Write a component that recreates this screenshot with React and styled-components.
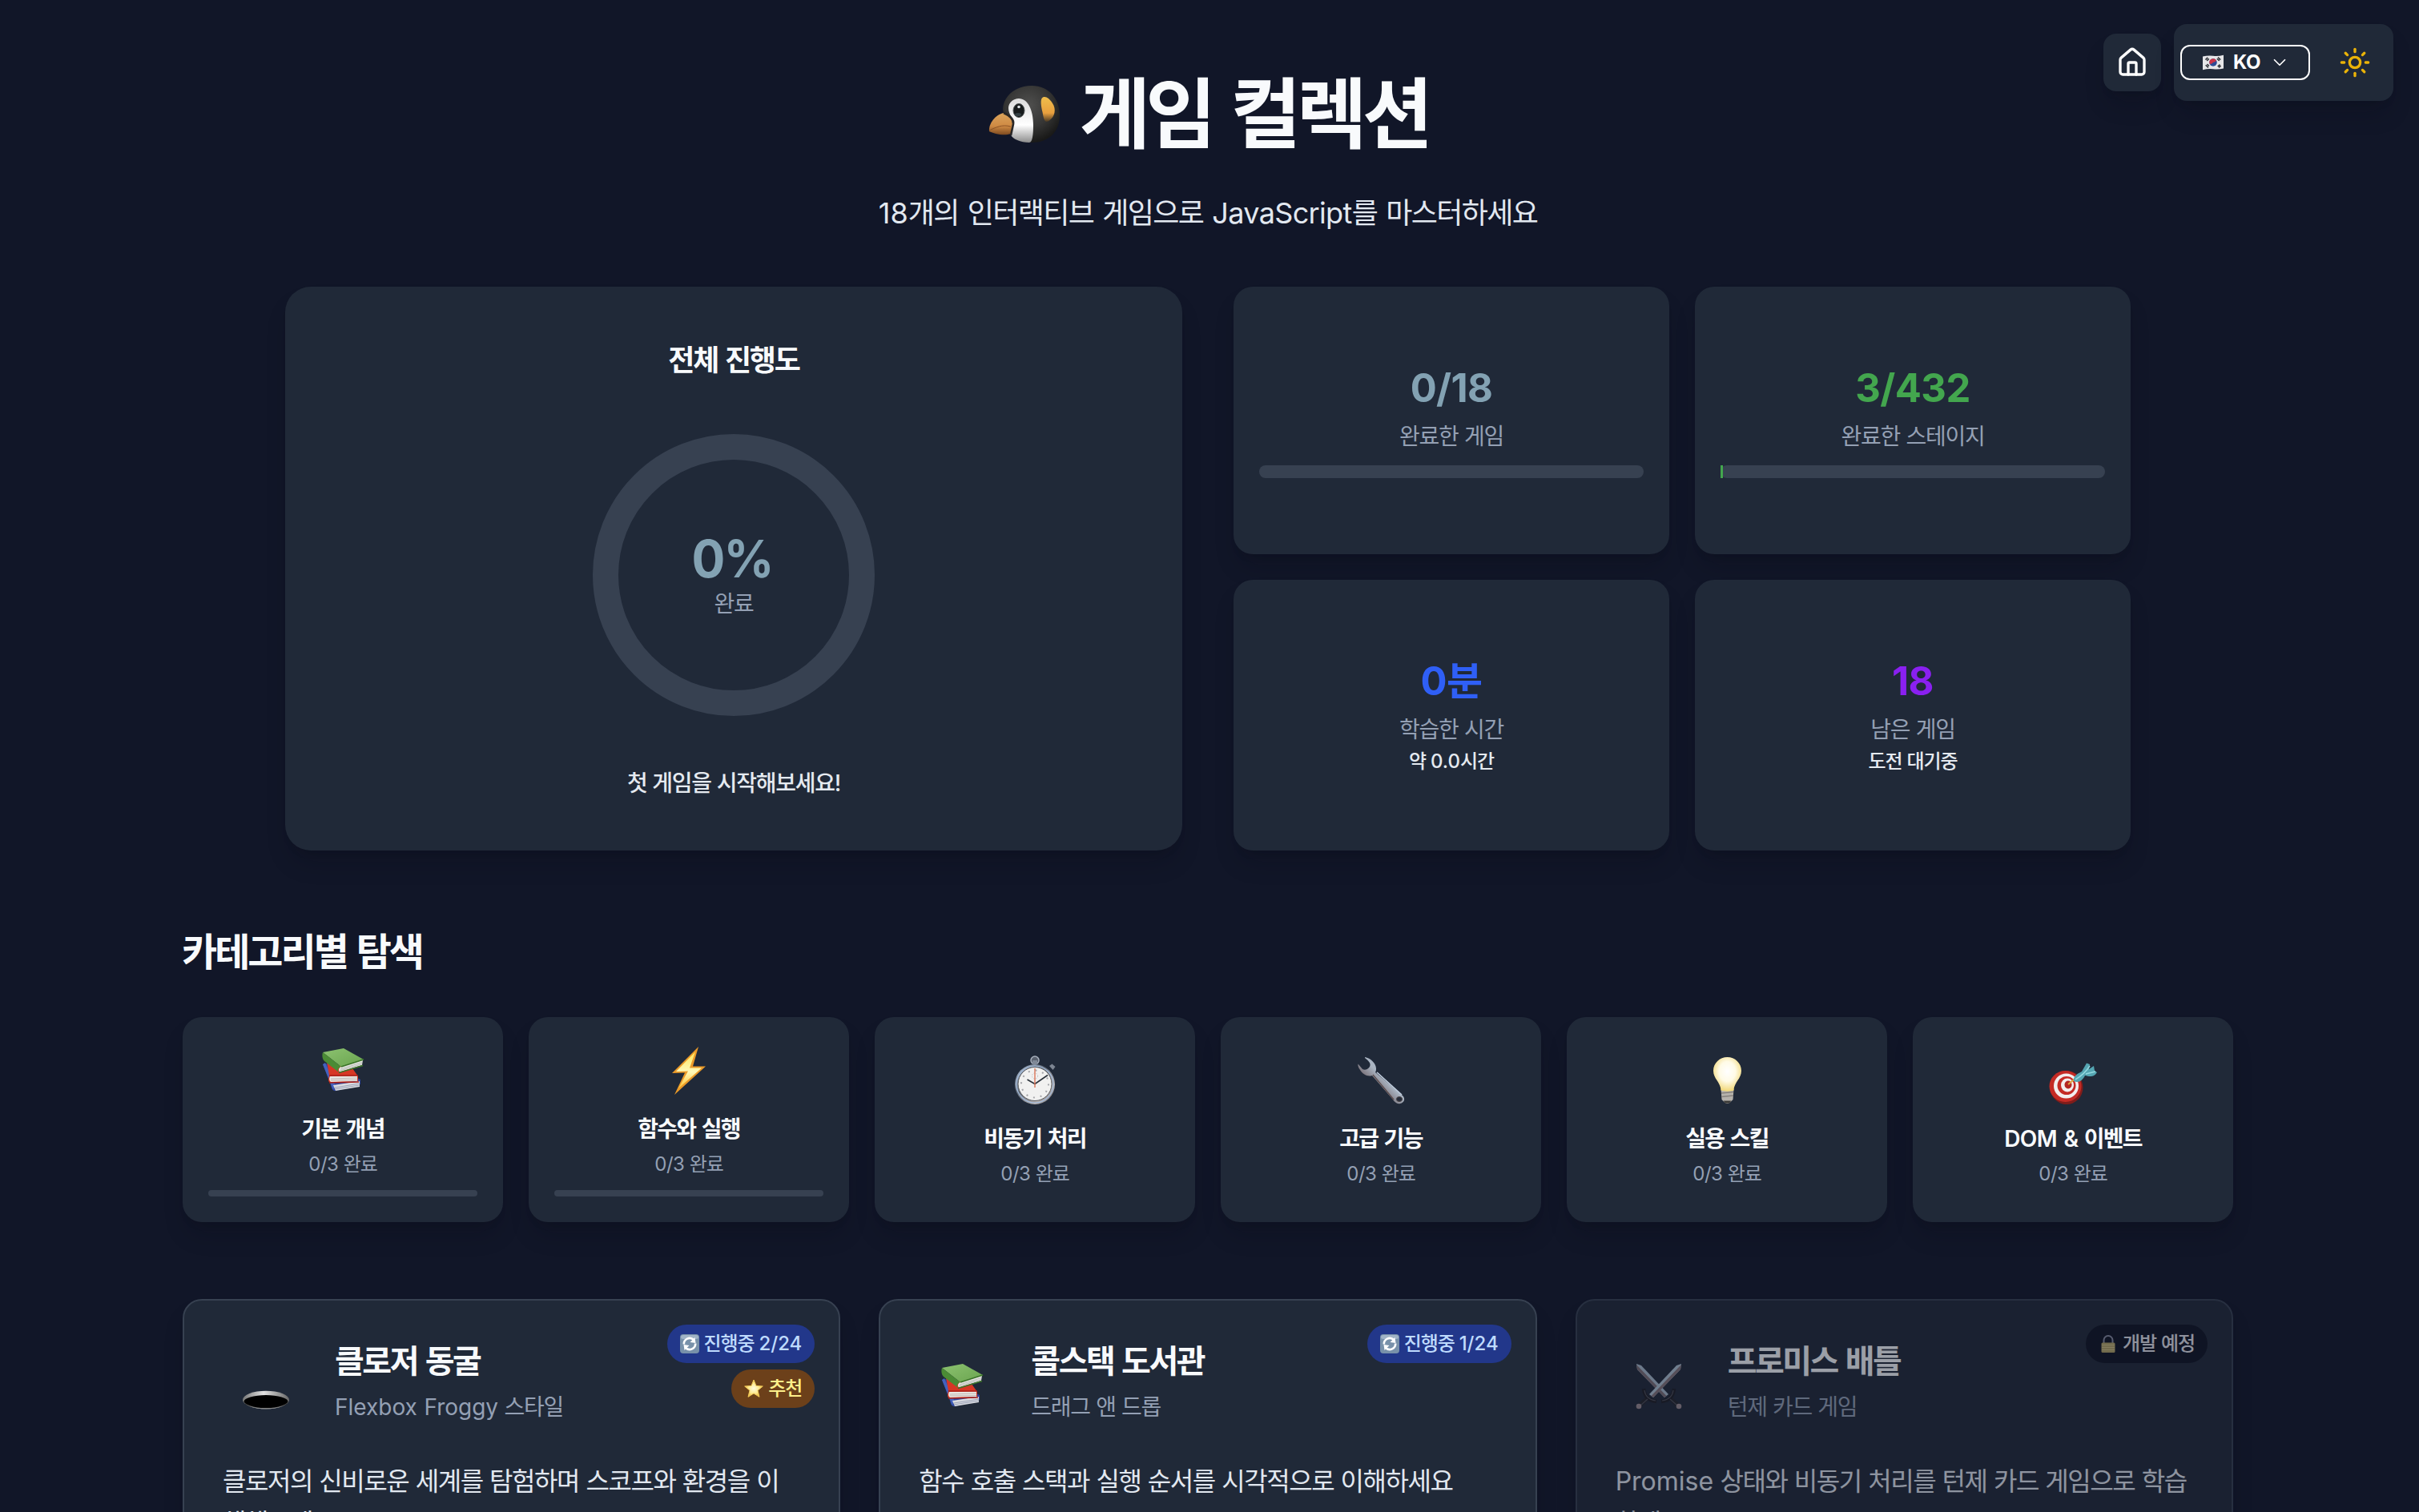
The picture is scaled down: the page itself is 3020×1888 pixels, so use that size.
import React from "react";
import styled, { createGlobalStyle, css } from "styled-components";
import { House, Sun, ChevronDown } from "lucide-react";

const Global = createGlobalStyle`
  *, *::before, *::after { box-sizing: border-box; }
  body {
    margin: 0;
    background: #111628;
    overflow: hidden;
    font-family: Inter, "Noto Sans CJK KR", sans-serif;
    -webkit-font-smoothing: antialiased;
  }
  h1, h2, h3, p { margin: 0; }
`;

const surface = css`
  background: #202938;
  box-shadow: 0 20px 30px -6px rgba(8, 10, 20, 0.2), 0 8px 12px -8px rgba(8, 10, 20, 0.2);
`;
const korean = css`
  letter-spacing: -0.045em;
  word-spacing: 0.025em;
  white-space: nowrap;
`;
const koreanHeading = css`
  letter-spacing: -0.062em;
  word-spacing: 0.07em;
  white-space: nowrap;
`;

const Latin = styled.span`
  letter-spacing: ${(p) => p.$ls || 0};
`;

const Page = styled.div`
  height: 1888px;
  overflow: hidden;
  padding: 82px 4px 0 0;
  color: #f8fafc;
`;

/* floating controls */
const Controls = styled.div`
  position: absolute;
  top: 30px;
  right: 32px;
  display: flex;
  align-items: center;
  gap: 16px;
`;
const HomeButton = styled.button`
  ${surface}
  width: 72px;
  height: 72px;
  border: 0;
  border-radius: 16px;
  padding: 0;
  display: grid;
  place-items: center;
  color: #fff;
`;
const Settings = styled.div`
  ${surface}
  height: 96px;
  width: 274px;
  border-radius: 16px;
  padding: 0 8px;
  display: flex;
  align-items: center;
  gap: 16px;
`;
const LangButton = styled.button`
  width: 162px;
  height: 44px;
  background: transparent;
  border: 2px solid #fff;
  border-radius: 12px;
  color: #fff;
  display: flex;
  align-items: center;
  padding: 0 0 0 26px;
  font: 700 24px/40px Inter, sans-serif;
`;
const LangCode = styled.span`
  margin: -1px 11px 0 12px;
  letter-spacing: -0.01em;
`;
const ThemeButton = styled.button`
  width: 80px;
  height: 80px;
  border: 0;
  background: transparent;
  padding: 0;
  display: grid;
  place-items: center;
  color: #eab308;
`;

/* header */
const Header = styled.header`
  display: flex;
  flex-direction: column;
  align-items: center;
  margin-bottom: 64px;
`;
const Title = styled.h1`
  ${koreanHeading}
  display: flex;
  align-items: center;
  gap: 23px;
  font-size: 96px;
  line-height: 120px;
  font-weight: 700;
`;
const Subtitle = styled.p`
  ${korean}
  word-spacing: 0.07em;
  margin-top: 36px;
  font-size: 36px;
  line-height: 56px;
  color: #e2e8f0;
`;

/* progress */
const Progress = styled.section`
  width: 2304px;
  height: 704px;
  margin: 0 auto;
  display: grid;
  grid-template-columns: 1fr 1fr;
  gap: 64px;
`;
const Overall = styled.div`
  ${surface}
  border-radius: 32px;
  padding: 64px;
  display: flex;
  flex-direction: column;
  align-items: center;
  gap: 64px;
`;
const OverallTitle = styled.h2`
  ${koreanHeading}
  font-size: 36px;
  line-height: 56px;
  font-weight: 700;
`;
const Ring = styled.div`
  width: 352px;
  height: 352px;
  border: 32px solid #374151;
  border-radius: 50%;
  display: flex;
  flex-direction: column;
  align-items: center;
  justify-content: center;
`;
const Percent = styled.div`
  font-size: 64px;
  line-height: 72px;
  font-weight: 700;
  letter-spacing: -0.03em;
  margin-right: 4px;
  transform: scaleX(0.97);
  color: #83a2b3;
`;
const Label = styled.div`
  ${korean}
  font-size: 28px;
  line-height: 40px;
  color: #94a0b4;
`;
const Cheer = styled.p`
  ${korean}
  font-size: 28px;
  line-height: 40px;
  font-weight: 500;
  color: #e5eaf0;
`;
const Stats = styled.div`
  display: grid;
  grid-template-columns: 1fr 1fr;
  grid-template-rows: auto auto;
  gap: 32px;
`;
const StatCard = styled.div`
  ${surface}
  border-radius: 24px;
  padding: 32px;
  display: flex;
  flex-direction: column;
  align-items: center;
  justify-content: center;
`;
const StatValue = styled.div`
  font-size: 49px;
  line-height: 64px;
  font-weight: 700;
  letter-spacing: -0.012em;
  margin-bottom: 8px;
  color: ${(p) => p.$color};
`;
const StatNote = styled.div`
  ${korean}
  margin-top: 4px;
  font-size: 24px;
  line-height: 32px;
  font-weight: 500;
  color: #e5eaf0;
`;
const Track = styled.div`
  width: 100%;
  height: ${(p) => p.$h}px;
  margin-top: 16px;
  border-radius: 8px;
  background: #374151;
`;
const Fill = styled.div`
  height: 100%;
  background: #43a64e;
`;

/* categories */
const Wide = styled.section`
  width: 2560px;
  margin: 0 auto;
`;
const SectionTitle = styled.h2`
  ${koreanHeading}
  margin: 95px 0 49px -1px;
  font-size: 48px;
  line-height: 64px;
  font-weight: 700;
`;
const Categories = styled.div`
  display: grid;
  grid-template-columns: repeat(6, 1fr);
  gap: 32px;
`;
const CategoryCard = styled.div`
  ${surface}
  height: 256px;
  border-radius: 24px;
  padding: 0 32px;
  display: flex;
  flex-direction: column;
  align-items: center;
  justify-content: center;
`;
const CategoryIcon = styled.div`
  height: 68px;
  margin-bottom: 20px;
  display: flex;
  align-items: center;
`;
const CategoryName = styled.h3`
  ${koreanHeading}
  font-size: 28px;
  line-height: 40px;
  font-weight: 600;
  margin-bottom: 8px;
`;
const CategoryCount = styled.div`
  ${korean}
  font-size: 24px;
  line-height: 32px;
  color: #94a0b4;
`;

/* games */
const Games = styled.div`
  margin-top: 96px;
  display: grid;
  grid-template-columns: repeat(3, 1fr);
  gap: 48px;
`;
const GameCard = styled.article`
  ${surface}
  position: relative;
  height: 480px;
  border: 2px solid #374151;
  border-radius: 24px;
  padding: 48px;
  opacity: ${(p) => (p.$locked ? 0.6 : 1)};
`;
const GameHead = styled.div`
  display: flex;
  gap: 32px;
  height: 104px;
  margin-bottom: 48px;
`;
const GameIcon = styled.div`
  width: 108px;
  padding-top: 26px;
  display: flex;
  justify-content: center;
`;
const GameTitle = styled.h3`
  ${koreanHeading}
  font-size: 40px;
  line-height: 55px;
  font-weight: 700;
`;
const GameStyle = styled.p`
  ${korean}
  margin-top: 10px;
  font-size: 28px;
  line-height: 40px;
  color: #94a0b4;
`;
const GameText = styled.p`
  ${korean}
  font-size: 32px;
  line-height: 52px;
  color: #e2e8f0;
`;
const Badges = styled.div`
  position: absolute;
  top: 30px;
  right: 30px;
  display: flex;
  flex-direction: column;
  align-items: flex-end;
  gap: 8px;
`;
const tones = {
  progress: ["#22378a", "#bfdbfe"],
  star: ["#6c401a", "#fef08a"],
  locked: ["#0f1422", "#e2e4ea"],
};
const Badge = styled.span`
  ${korean}
  height: 48px;
  border-radius: 24px;
  padding: 0 16px;
  display: flex;
  align-items: center;
  gap: 6px;
  font-size: 24px;
  line-height: 48px;
  font-weight: 500;
  background: ${(p) => tones[p.$tone][0]};
  color: ${(p) => tones[p.$tone][1]};
`;

const PenguinSvg = styled.svg`
  margin-top: 2px;
`;
const Penguin = () => (
  <PenguinSvg width="92" height="76" viewBox="0 0 92 76">
    <defs>
      <radialGradient id="pgHead" cx=".45" cy=".35" r=".65">
        <stop offset="0" stopColor="#50504f" />
        <stop offset=".6" stopColor="#353534" />
        <stop offset="1" stopColor="#191918" />
      </radialGradient>
      <linearGradient id="pgFace" x1="0" y1="0" x2="0" y2="1">
        <stop offset="0" stopColor="#dcdcdc" />
        <stop offset=".6" stopColor="#ffffff" />
        <stop offset="1" stopColor="#8d8d8d" />
      </linearGradient>
      <linearGradient id="pgBeak" x1="0" y1="0" x2="0" y2="1">
        <stop offset="0" stopColor="#dba45c" />
        <stop offset=".6" stopColor="#cf8a43" />
        <stop offset="1" stopColor="#7d4a20" />
      </linearGradient>
      <linearGradient id="pgEar" x1="0" y1="0" x2="0" y2="1">
        <stop offset="0" stopColor="#efbd4c" />
        <stop offset=".65" stopColor="#e9a03e" />
        <stop offset="1" stopColor="#4b3a24" />
      </linearGradient>
    </defs>
    <path d="M55 2C77 2 90 19 90 39C90 60 76 73 55 73C40 73 29 66 29 53C29 45 19 40 19 31C20 14 36 2 55 2Z" fill="url(#pgHead)" />
    <path d="M39 18C50 18 57 32 57 51C57 63 56 73 52 73C42 73 31 69 29 63L32 48C32 42 26 38 26 30C26 23 32 18 39 18Z" fill="url(#pgFace)" />
    <path d="M20 36C26 40 31 44 31 50L29 62C20 65 8 62 2 59C1 49 10 38 20 36Z" fill="url(#pgBeak)" />
    <path d="M2 58C10 54 18 50 29 53" fill="none" stroke="#8d5426" strokeWidth="1" />
    <path d="M20 36C27 39 33 44 32 50L29 64" fill="none" stroke="#292726" strokeWidth="2.6" />
    <ellipse cx="39" cy="33" rx="7" ry="8.5" fill="#171b1c" stroke="#4e5354" strokeWidth="1" />
    <circle cx="39" cy="28.5" r="1.8" fill="#dfe5e8" />
    <ellipse cx="38" cy="38" rx="4" ry="2" fill="#344044" />
    <path d="M69 16.500C65 18 67 29 68.500 35C70 43 71 50 77 45.500C84 41 86 31 81 24C77 18 73 15 69 16.500Z" fill="url(#pgEar)" />
  </PenguinSvg>
);

const Flag = () => (
  <svg width="26" height="20" viewBox="0 0 24 18">
    <path d="M0 2Q6 .8 12 1.4T24 .4V16Q18 17.2 12 16.6T0 17.6Z" fill="#e6e6e8" />
    <circle cx="12" cy="9" r="4.4" fill="#2c4a94" />
    <path d="M7.9 10.4A4.4 4.4 0 0 1 15.6 6.4C14.8 8.8 13 8.2 12 9S9.400 11.600 7.900 10.400Z" fill="#cb3447" />
    <path d="M3.200 5.800l2.600-2.400M4.800 7l2.400-2.200M17.500 3l3 2.800M16.500 4.600l2.600 2.400M3.400 12l3 2.800M5 11l2.200 2M17.300 13.800l2.600-2.400M18.500 14.800l2.300-2" stroke="#33363c" strokeWidth="1.500" />
  </svg>
);

const Emoji = ({ children, size = 64 }) => (
  <svg width={size} height={size} viewBox="0 0 64 64">{children}</svg>
);

const Books = ({ id }) => (
  <Emoji>
    <defs>
      <linearGradient id={id + "g"} x1="0" y1="0" x2="1" y2="1">
        <stop offset="0" stopColor="#8cc270" />
        <stop offset="1" stopColor="#6aa44f" />
      </linearGradient>
    </defs>
    <path d="M7 25L12 24L54 44L54 50L24 58C19 59 18 55 17 51Z" fill="#2c449c" />
    <path d="M7 25L10 23L22 50L20 57Z" fill="#4462bd" />
    <path d="M20 51L53 46L53 53L23 58Z" fill="#d9dbe1" />
    <path d="M22 54L53 49M22 56L53 51" stroke="#8e95ad" strokeWidth=".8" />
    <path d="M12 22L44 30L51 40L51 46L16 48C13 46 14 42 15 39Z" fill="#d73725" />
    <path d="M16 40L50 39.500L50 46L17 47C14.500 45 15 42 16 40Z" fill="#e9e7e3" />
    <path d="M17 43L50 42M17 45L50 44.500" stroke="#b9aaa7" strokeWidth=".8" />
    <path d="M15 39L51 39M15 48L52 47" stroke="#a91f18" strokeWidth="1.600" />
    <path d="M7 10L33 5L58 19L30 28Z" fill={`url(#${id}g)`} />
    <path d="M7 10C6 13 6 18 9 21L27 35C25 32 26 30 30 28Z" fill="#4b8b35" />
    <path d="M30 28L57 19.500L56 26L28 34.500C26 32 27 29.500 30 28Z" fill="#e8e8e4" />
    <path d="M29 31L56 22.500M28 33L56 24.500" stroke="#aab0aa" strokeWidth=".8" />
    <path d="M30 28L58 19M27 35.500L57 26.500" stroke="#3a7328" strokeWidth="1.500" />
  </Emoji>
);
const Bolt = () => (
  <Emoji>
    <defs>
      <linearGradient id="bolt" x1="0" y1="0" x2="0" y2="1">
        <stop offset="0" stopColor="#ffe65a" />
        <stop offset=".55" stopColor="#fff9b8" />
        <stop offset="1" stopColor="#ffc531" />
      </linearGradient>
    </defs>
    <path d="M44 3L11 36L27 35.500L14 63L53 27.500L37 27.500Z" fill="#eb9a28" />
    <path d="M40 9.500L16 34L31 33.500L19 55L48 29.500L33 29.500Z" fill="url(#bolt)" />
  </Emoji>
);
const Stopwatch = () => (
  <Emoji>
    <defs>
      <linearGradient id="rim" x1="0" y1="0" x2="1" y2="1">
        <stop offset="0" stopColor="#b9c9dd" />
        <stop offset=".4" stopColor="#626b78" />
        <stop offset=".75" stopColor="#b8b2b1" />
        <stop offset="1" stopColor="#55575e" />
      </linearGradient>
    </defs>
    <circle cx="32" cy="8" r="5" fill="#59616e" stroke="#a8b0bd" strokeWidth="1.500" />
    <path d="M29 8h6v5h-6Z" fill="#7f8896" />
    <path d="M50 15l3.500-2.500 4 3.500-3 4Z" fill="#7d8592" />
    <circle cx="32" cy="38" r="25" fill="url(#rim)" />
    <circle cx="32" cy="38" r="23" fill="none" stroke="#a3bbdc" strokeWidth="1.200" />
    <circle cx="32" cy="37.500" r="21" fill="#f1f1f0" stroke="#595b60" strokeWidth="1" />
    <circle cx="32" cy="37.500" r="17" fill="none" stroke="#a4a5a9" strokeWidth="2" strokeDasharray="2 6.900" />
    <circle cx="32" cy="27.500" r="3.600" fill="none" stroke="#c1c1c4" strokeDasharray="1.500 1.500" />
    <path d="M22.500 32L32 37.500L48 26.500" fill="none" stroke="#2b323b" strokeWidth="1.600" />
    <path d="M32 18V42" stroke="#dc7658" strokeWidth="1.400" />
  </Emoji>
);
const Wrench = () => (
  <Emoji>
    <defs>
      <linearGradient id="wr" x1="0" y1="1" x2="1" y2="0">
        <stop offset=".3" stopColor="#6a5c61" />
        <stop offset=".55" stopColor="#a9b4c2" />
      </linearGradient>
    </defs>
    <path d="M12 4C19 5 26 12 26 18C26 20 26 21 25 23L59 52C63 56 61 61 56 62C52 63 49 60 47 57L21 27C15 29 9 25 6 20C4 17 3 15 3.500 12.500L9 19C12 21 16 19 18 16C20 12 17 9 12 5Z" fill="url(#wr)" />
    <path d="M27 23L58 51" stroke="#c3d0e0" strokeWidth="1.600" fill="none" />
    <path d="M22 26L48 57" stroke="#5b4b4c" strokeWidth="1.300" fill="none" />
    <ellipse cx="55" cy="56.500" rx="3.600" ry="3" fill="#252c3a" stroke="#4d4649" />
  </Emoji>
);
const Bulb = () => (
  <Emoji>
    <defs>
      <radialGradient id="bulb" cx=".5" cy=".42" r=".58">
        <stop offset="0" stopColor="#ffffff" />
        <stop offset=".5" stopColor="#fffbe6" />
        <stop offset="1" stopColor="#f1d777" />
      </radialGradient>
    </defs>
    <path d="M24.500 44h16l-1 13-3 3c-2 2.500-6 2.500-8 0l-3-3Z" fill="#b6b2ac" />
    <path d="M25 49l15-1.500M25 53.500l15-1.500" stroke="#85817c" strokeWidth="1.400" />
    <path d="M27.500 58.500h10l-2.500 3h-5Z" fill="#3a3937" />
    <path d="M32.500 4C42 4 50 11.500 50 21C50 31 41 35 40.500 45.500C36 47 29 47 24.500 45.500C24 35 15 31 15 21C15 11.500 23 4 32.500 4Z" fill="url(#bulb)" />
  </Emoji>
);
const Target = () => (
  <Emoji>
    <ellipse cx="24" cy="42" rx="20.500" ry="21" fill="#7f1c1a" />
    <ellipse cx="22.500" cy="40.500" rx="20" ry="19.500" fill="#c42b25" />
    <ellipse cx="23.500" cy="40" rx="15.500" ry="15.500" fill="#f2eeee" />
    <ellipse cx="24" cy="39.500" rx="11.500" ry="11.500" fill="#c42b25" />
    <ellipse cx="25" cy="39" rx="8" ry="8.500" fill="#f2eeee" />
    <ellipse cx="26" cy="38.500" rx="4.500" ry="5" fill="#b32622" />
    <path d="M26 38L37 29" stroke="#dda740" strokeWidth="2" />
    <path d="M33 34C32 28 37 25 43 22L49 11.500L53 13L52 19L58 15L59 21L62 23C58 30 52 28 47 27C44 33 39 37 33 34Z" fill="#54a5b2" />
    <path d="M35 32C40 29 48 23 53 15M48 25L60 22" stroke="#93d8df" strokeWidth="1.500" fill="none" />
  </Emoji>
);
const Hole = () => (
  <Emoji>
    <defs>
      <linearGradient id="hole" x1="0" x2="1" y1="0" y2="0">
        <stop offset="0" stopColor="#777" />
        <stop offset=".45" stopColor="#e2e2e2" />
        <stop offset="1" stopColor="#666" />
      </linearGradient>
      <linearGradient id="holeRim" x1="0" x2="0" y1="0" y2="1">
        <stop offset=".5" stopColor="#8a8a8a" stopOpacity="0" />
        <stop offset="1" stopColor="#8a8a8a" />
      </linearGradient>
    </defs>
    <ellipse cx="32" cy="50" rx="29" ry="11.300" fill="url(#hole)" />
    <ellipse cx="32" cy="52.300" rx="27.500" ry="8.300" fill="#000" />
    <ellipse cx="32" cy="50" rx="28.500" ry="10.800" fill="none" stroke="url(#holeRim)" />
  </Emoji>
);
const Swords = () => (
  <Emoji>
    <path d="M4 5L10 7L44 43L39 47L5 12Z" fill="#a9bccb" />
    <path d="M4 6L5 12L39 47L41.500 45Z" fill="#7d6f75" />
    <path d="M60 5L54 7L20 43L25 47L59 12Z" fill="#b0c3d2" />
    <path d="M60 6L59 12L25 47L22.500 45Z" fill="#85757a" />
    <path d="M20 46L8 57M44 46L56 57" stroke="#24252b" strokeWidth="5.500" />
    <path d="M13 36C14 46 20 51 29 52M51 36C50 46 44 51 35 52" fill="none" stroke="#1d1e24" strokeWidth="4.500" />
    <path d="M14 38C15 46 21 50 28 51M50 38C49 46 43 50 36 51M18 49L9 57M46 49L55 57" fill="none" stroke="#4a4c55" strokeWidth="1.200" />
    <circle cx="7" cy="58" r="3.300" fill="#9a8c90" />
    <circle cx="57" cy="58" r="3.300" fill="#9a8c90" />
  </Emoji>
);
const Refresh = () => (
  <svg width="24" height="24" viewBox="0 0 24 24">
    <rect width="24" height="24" rx="4" fill="#7891aa" />
    <rect x="1" y="1" width="22" height="5" rx="3" fill="#a1b4c6" />
    <path d="M4.800 12.500A7.200 7.200 0 0 1 17 7M19.200 11.500A7.200 7.200 0 0 1 7 17" fill="none" stroke="#fff" strokeWidth="2.600" />
    <path d="M12.500 10L19.500 11L18.500 4ZM11.500 14L4.500 13L5.500 20Z" fill="#fff" />
  </svg>
);
const Star = () => (
  <svg width="24" height="24" viewBox="0 0 24 24">
    <defs>
      <radialGradient id="star" cx=".5" cy=".5" r=".5">
        <stop offset="0" stopColor="#fffce0" />
        <stop offset=".6" stopColor="#fde990" />
        <stop offset="1" stopColor="#eab640" />
      </radialGradient>
    </defs>
    <path d="M12 1L15 8.400L23.300 9L17 14.200L19 22.300L12 17.900L5 22.300L7 14.200L.7 9L9 8.400Z" fill="url(#star)" stroke="#f2cb58" strokeWidth="1" strokeLinejoin="round" />
  </svg>
);
const Lock = () => (
  <svg width="24" height="24" viewBox="0 0 24 24">
    <path d="M6.500 12V7.500a5.500 5.500 0 0 1 11 0V12" fill="none" stroke="#878ca0" strokeWidth="2" />
    <rect x="3.500" y="10.500" width="17" height="12.500" rx="1.500" fill="#b3a466" />
    <path d="M4 13.500h16M4 16.500h16M4 19.500h16" stroke="#cfc283" strokeWidth="1" />
  </svg>
);

const categories = [
  { icon: <Books id="c" />, name: "기본 개념", bar: true },
  { icon: <Bolt />, name: "함수와 실행", bar: true },
  { icon: <Stopwatch />, name: "비동기 처리" },
  { icon: <Wrench />, name: "고급 기능" },
  { icon: <Bulb />, name: "실용 스킬" },
  { icon: <Target />, name: <><Latin $ls="-0.02em">DOM &amp;</Latin> 이벤트</> },
];

const games = [
  {
    icon: <Hole />,
    title: "클로저 동굴",
    style: <><Latin>Flexbox Froggy</Latin> 스타일</>,
    text: <>클로저의 신비로운 세계를 탐험하며 스코프와 환경을 이<br />해해보세요</>,
    badges: [
      { tone: "progress", icon: <Refresh />, text: <>진행중 <Latin>2/24</Latin></> },
      { tone: "star", icon: <Star />, text: "추천" },
    ],
  },
  {
    icon: <Books id="g" />,
    title: "콜스택 도서관",
    style: "드래그 앤 드롭",
    text: "함수 호출 스택과 실행 순서를 시각적으로 이해하세요",
    badges: [{ tone: "progress", icon: <Refresh />, text: <>진행중 <Latin>1/24</Latin></> }],
  },
  {
    icon: <Swords />,
    title: "프로미스 배틀",
    style: "턴제 카드 게임",
    text: <><Latin>Promise</Latin> 상태와 비동기 처리를 턴제 카드 게임으로 학습<br />하세요</>,
    badges: [{ tone: "locked", icon: <Lock />, text: "개발 예정" }],
    locked: true,
  },
];

export default function App() {
  const stageRatio = 3 / 432;
  return (
    <Page>
      <Global />
      <Controls>
        <HomeButton><House size={40} strokeWidth={2} /></HomeButton>
        <Settings>
          <LangButton>
            <Flag />
            <LangCode>KO</LangCode>
            <ChevronDown size={26} strokeWidth={1.6} />
          </LangButton>
          <ThemeButton><Sun size={40} strokeWidth={2} /></ThemeButton>
        </Settings>
      </Controls>

      <Header>
        <Title><Penguin /><span>게임 컬렉션</span></Title>
        <Subtitle><Latin>18</Latin>개의 인터랙티브 게임으로 <Latin $ls="-0.018em">JavaScript</Latin>를 마스터하세요</Subtitle>
      </Header>

      <Progress>
        <Overall>
          <OverallTitle>전체 진행도</OverallTitle>
          <Ring>
            <Percent>0%</Percent>
            <Label>완료</Label>
          </Ring>
          <Cheer>첫 게임을 시작해보세요!</Cheer>
        </Overall>
        <Stats>
          <StatCard>
            <StatValue $color="#83a2b3">0/18</StatValue>
            <Label>완료한 게임</Label>
            <Track $h={16} />
          </StatCard>
          <StatCard>
            <StatValue $color="#43a64e">3/432</StatValue>
            <Label>완료한 스테이지</Label>
            <Track $h={16}><Fill style={{ width: `${stageRatio * 100}%` }} /></Track>
          </StatCard>
          <StatCard>
            <StatValue $color="#2f5ff6">0분</StatValue>
            <Label>학습한 시간</Label>
            <StatNote>약 <Latin>0.0</Latin>시간</StatNote>
          </StatCard>
          <StatCard>
            <StatValue $color="#8a20f0">18</StatValue>
            <Label>남은 게임</Label>
            <StatNote>도전 대기중</StatNote>
          </StatCard>
        </Stats>
      </Progress>

      <Wide>
        <SectionTitle>카테고리별 탐색</SectionTitle>
        <Categories>
          {categories.map((c, i) => (
            <CategoryCard key={i}>
              <CategoryIcon>{c.icon}</CategoryIcon>
              <CategoryName>{c.name}</CategoryName>
              <CategoryCount><Latin $ls="-0.02em">0/3</Latin> 완료</CategoryCount>
              {c.bar && <Track $h={8} />}
            </CategoryCard>
          ))}
        </Categories>
        <Games>
          {games.map((g, i) => (
            <GameCard key={i} $locked={g.locked}>
              <Badges>
                {g.badges.map((b, j) => (
                  <Badge key={j} $tone={b.tone}>{b.icon}<span>{b.text}</span></Badge>
                ))}
              </Badges>
              <GameHead>
                <GameIcon>{g.icon}</GameIcon>
                <div>
                  <GameTitle>{g.title}</GameTitle>
                  <GameStyle>{g.style}</GameStyle>
                </div>
              </GameHead>
              <GameText>{g.text}</GameText>
            </GameCard>
          ))}
        </Games>
      </Wide>
    </Page>
  );
}
